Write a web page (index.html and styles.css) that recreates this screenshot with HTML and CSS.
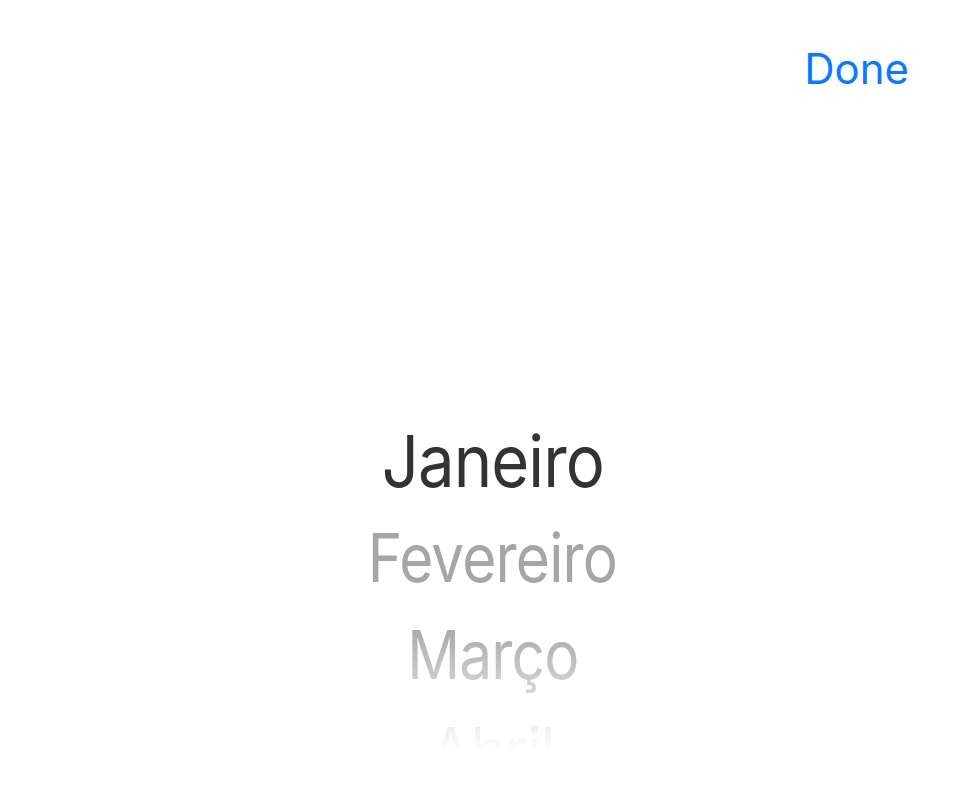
FILE: index.html
```html
<!DOCTYPE html>
<html lang="pt">
<head>
<meta charset="utf-8">
<title>Picker</title>
<link rel="stylesheet" href="styles.css">
</head>
<body>
<div class="screen">
  <div class="toolbar">
    <span class="done">Done</span>
  </div>
  <div class="picker">
    <ul class="wheel">
      <li class="item selected">Janeiro</li>
      <li class="item">Fevereiro</li>
      <li class="item">Março</li>
      <li class="item">Abril</li>
    </ul>
  </div>
</div>
</body>
</html>
```
FILE: styles.css
```css
html, body {
  margin: 0;
  padding: 0;
  background: #ffffff;
}
.screen {
  width: 960px;
  height: 786px;
  display: flex;
  flex-direction: column;
  font-family: Inter, "Liberation Sans", sans-serif;
}
.toolbar {
  height: 140px;
  display: flex;
  justify-content: flex-end;
  align-items: flex-start;
  padding: 0 51px 0 0;
}
.done {
  margin-top: 39px;
  font-size: 42px;
  line-height: 60px;
  color: #0a7aff;
  letter-spacing: 0;
}
.picker {
  height: 612px;
  overflow: hidden;
  -webkit-mask-image: linear-gradient(to bottom, #000 0%, #000 79%, transparent 100%);
  mask-image: linear-gradient(to bottom, #000 0%, #000 79%, transparent 100%);
}
.wheel {
  list-style: none;
  margin: 0;
  padding: 272px 0 0 25px;
  display: flex;
  flex-direction: column;
  align-items: center;
}
.item {
  height: 97px;
  line-height: 97px;
  font-size: 67px;
  color: #a6a6a6;
  letter-spacing: -1px;
  transform: scaleX(0.875);
}
.selected {
  font-size: 72px;
  color: #333333;
  transform: scaleX(0.905);
}
```
